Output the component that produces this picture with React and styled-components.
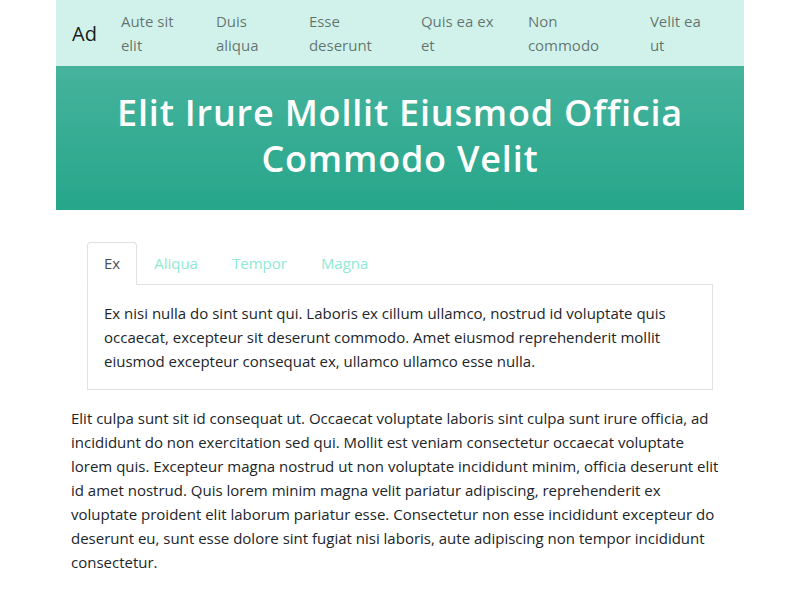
import { useState } from "react";
import styled, { createGlobalStyle } from "styled-components";

const GlobalStyle = createGlobalStyle`
    body {
        margin: 0;
        font-family: "Open Sans", "Noto Sans", sans-serif;
        font-size: 15px;
        line-height: 24px;
        color: #212529;
        background: #fff;
    }
`;

const Page = styled.div`
    width: 688px;
    margin: 0 auto;
`;

const Navbar = styled.nav`
    display: flex;
    align-items: center;
    height: 66px;
    padding: 0 16px;
    box-sizing: border-box;
    background-color: #d1f2ea;
`;

const Brand = styled.a`
    font-size: 20px;
    line-height: 30px;
    margin-top: 2px;
    color: rgba(0, 0, 0, 0.9);
    margin-right: 16px;
`;

const NavList = styled.ul`
    display: flex;
    list-style: none;
    margin: 0;
    padding: 0;
`;

const NavLink = styled.li`
    width: ${(p) => p.$w}px;
    box-sizing: border-box;
    padding: 0 8px;
    color: rgba(0, 0, 0, 0.55);

    span {
        display: block;
    }
`;

const Hero = styled.header`
    display: flex;
    align-items: center;
    justify-content: center;
    height: 144px;
    box-sizing: border-box;
    padding: 0 16px 5px;
    background: linear-gradient(180deg, #46b39d 0%, #26a68a 100%);

    h1 {
        margin: 0;
        color: #fff;
        font-size: 36px;
        line-height: 46px;
        font-weight: 600;
        letter-spacing: 0.8px;
        text-align: center;
    }
`;

const Main = styled.main`
    padding: 0 15px;
`;

const TabBox = styled.section`
    margin: 32px 16px 16px;
`;

const TabList = styled.div`
    display: flex;
    border-bottom: 1px solid #dee2e6;
`;

const Tab = styled.button`
    font: inherit;
    margin-bottom: -1px;
    padding: 8px 16px 9px;
    background: ${(p) => (p.$active ? "#fff" : "transparent")};
    border: 1px solid transparent;
    border-color: ${(p) => (p.$active ? "#dee2e6 #dee2e6 #fff" : "transparent")};
    border-top-left-radius: 4px;
    border-top-right-radius: 4px;
    color: ${(p) => (p.$active ? "#495057" : "#8eead4")};
    cursor: pointer;
    outline: none;
`;

const Panel = styled.div`
    padding: 16px;
    border: 1px solid #dee2e6;
    border-top: 0;

    p {
        margin: 0;
    }
`;

const Body = styled.p`
    margin: 0 0 16px;
`;

const links = [
    { lines: ["Aute sit", "elit"], w: 95 },
    { lines: ["Duis", "aliqua"], w: 93 },
    { lines: ["Esse", "deserunt"], w: 112 },
    { lines: ["Quis ea ex", "et"], w: 107 },
    { lines: ["Non", "commodo"], w: 122 },
    { lines: ["Velit ea", "ut"], w: 86 },
];

const tabs = ["Ex", "Aliqua", "Tempor", "Magna"];

const App = () => {
    const [active, setActive] = useState(0);

    return (
        <Page>
            <GlobalStyle />
            <Navbar>
                <Brand>Ad</Brand>
                <NavList>
                    {links.map((l) => (
                        <NavLink key={l.lines.join(" ")} $w={l.w}>
                            {l.lines.map((line) => (
                                <span key={line}>{line}</span>
                            ))}
                        </NavLink>
                    ))}
                </NavList>
            </Navbar>
            <Hero>
                <h1>Elit Irure Mollit Eiusmod Officia Commodo Velit</h1>
            </Hero>
            <Main>
                <TabBox>
                    <TabList>
                        {tabs.map((t, i) => (
                            <Tab key={t} $active={i === active} onClick={() => setActive(i)}>{t}</Tab>
                        ))}
                    </TabList>
                    <Panel>
                        <p>
                            Ex nisi nulla do sint sunt qui. Laboris ex cillum ullamco, nostrud id voluptate quis
                            occaecat, excepteur sit deserunt commodo. Amet eiusmod reprehenderit mollit eiusmod
                            excepteur consequat ex, ullamco ullamco esse nulla.
                        </p>
                    </Panel>
                </TabBox>
                <Body>
                    Elit culpa sunt sit id consequat ut. Occaecat voluptate laboris sint culpa sunt irure officia, ad
                    incididunt do non exercitation sed qui. Mollit est veniam consectetur occaecat voluptate lorem
                    quis. Excepteur magna nostrud ut non voluptate incididunt minim, officia deserunt elit id amet
                    nostrud. Quis lorem minim magna velit pariatur adipiscing, reprehenderit ex voluptate proident
                    elit laborum pariatur esse. Consectetur non esse incididunt excepteur do deserunt eu, sunt esse
                    dolore sint fugiat nisi laboris, aute adipiscing non tempor incididunt consectetur.
                </Body>
            </Main>
        </Page>
    );
};

export default App;
